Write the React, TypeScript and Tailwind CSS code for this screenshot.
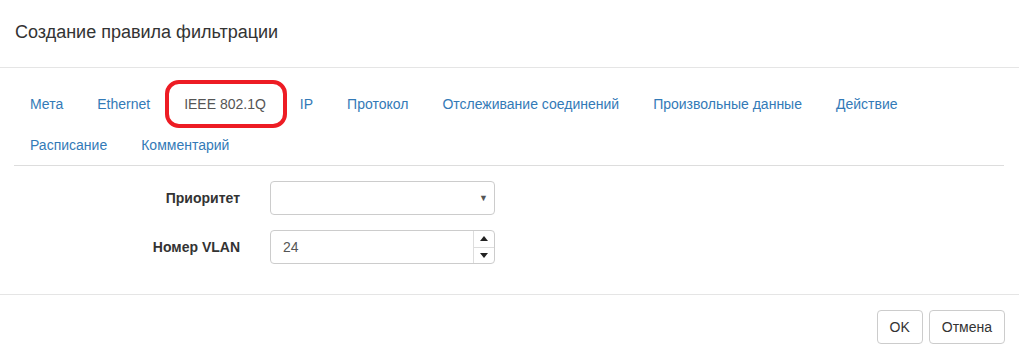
import React from "react";

const tabsRow = [
  "Мета",
  "Ethernet",
  "IEEE 802.1Q",
  "IP",
  "Протокол",
  "Отслеживание соединений",
  "Произвольные данные",
  "Действие",
  "Расписание",
  "Комментарий",
];

function Tab({ label, active }: { label: string; active?: boolean }) {
  return (
    <li className="relative mr-[2px] -mb-px">
      <a
        href="#"
        className={
          "block px-[15px] py-[10px] leading-[20px] border border-transparent " +
          (active ? "text-[#555]" : "text-[#337ab7]")
        }
      >
        {label}
      </a>
      {active && (
        <span className="absolute left-[-3px] top-[-3px] w-[122px] h-[48px] border-[4px] border-[#ed1c24] rounded-[14px] pointer-events-none" />
      )}
    </li>
  );
}

export default function App() {
  return (
    <div
      className="w-[1019px] bg-white text-[14px] text-[#333]"
      style={{ fontFamily: '"Liberation Sans", Arial, sans-serif' }}
    >
      {/* header */}
      <div className="h-[68px] px-[15px] flex items-center border-b border-[#e5e5e5]">
        <h4 className="text-[18px] leading-[25px] -mt-[2px]">Создание правила фильтрации</h4>
      </div>

      {/* body */}
      <div className="pl-[14px] pr-[15px] pt-[15px] pb-[15px]">
        <ul className="flex flex-wrap border-b border-[#ddd]">
          {tabsRow.map((t) => (
            <Tab key={t} label={t} active={t === "IEEE 802.1Q"} />
          ))}
        </ul>

        <div className="pt-[15px]">
          <div className="flex items-center mb-[15px]">
            <label className="w-[241px] pr-[15px] text-right font-bold">Приоритет</label>
            <div className="ml-[15px] w-[225px] h-[34px] border border-[#ccc] rounded-[4px] relative flex items-center">
              <span className="absolute right-[6px] top-[10px] text-[9px] text-[#555]">▼</span>
            </div>
          </div>
          <div className="flex items-center mb-[15px]">
            <label className="w-[241px] pr-[15px] text-right font-bold">Номер VLAN</label>
            <div className="ml-[15px] w-[225px] h-[34px] border border-[#ccc] rounded-[4px] flex items-center">
              <span className="flex-1 pl-[12px] text-[#555]">24</span>
              <div className="w-[21px] h-full border-l border-[#ddd] flex flex-col">
                <div className="flex-1 flex items-center justify-center border-b border-[#ddd]">
                  <svg width="8" height="5" viewBox="0 0 8 5">
                    <path d="M0 5 L4 0 L8 5 Z" fill="#222" />
                  </svg>
                </div>
                <div className="flex-1 flex items-center justify-center">
                  <svg width="8" height="5" viewBox="0 0 8 5">
                    <path d="M0 0 L4 5 L8 0 Z" fill="#222" />
                  </svg>
                </div>
              </div>
            </div>
          </div>
        </div>
      </div>

      {/* footer */}
      <div className="border-t border-[#e5e5e5] px-[14px] py-[15px] flex justify-end gap-[6px]">
        <button className="h-[34px] px-[12px] border border-[#ccc] rounded-[4px] bg-white text-[#333]">
          OK
        </button>
        <button className="h-[34px] px-[12px] border border-[#ccc] rounded-[4px] bg-white text-[#333]">
          Отмена
        </button>
      </div>
    </div>
  );
}
